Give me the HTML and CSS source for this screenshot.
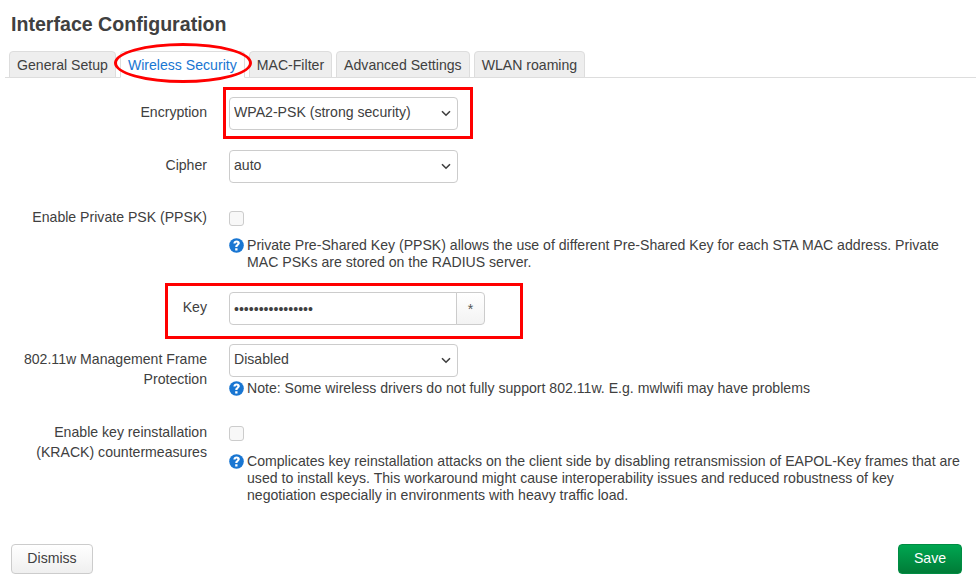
FILE: index.html
```html
<!DOCTYPE html>
<html lang="en">
<head>
<meta charset="utf-8">
<title>Interface Configuration</title>
<link rel="stylesheet" href="styles.css">
</head>
<body>
<svg class="defs" width="0" height="0" aria-hidden="true"><symbol id="help" viewBox="0 0 15 15"><circle cx="7.5" cy="7.5" r="7.3" fill="#1976d2"/><path d="M4.4 5.6C4.4 3.7 5.8 2.5 7.7 2.5c1.8 0 3.1 1.1 3.1 2.6 0 1.1-.6 1.7-1.4 2.3-.7.5-.9.8-.9 1.4v.3H6.3v-.5c0-1 .3-1.5 1.2-2.2.6-.4.9-.7.9-1.2s-.3-.8-.8-.8c-.6 0-1 .4-1 1.2zM6.2 10.3h2.3v2.1H6.2z" fill="#fff"/></symbol></svg>
<main class="page">
  <h2 class="title">Interface Configuration</h2>
  <ul class="tabs">
    <li class="tab">General Setup</li>
    <li class="tab active">Wireless Security</li>
    <li class="tab">MAC-Filter</li>
    <li class="tab">Advanced Settings</li>
    <li class="tab">WLAN roaming</li>
  </ul>
  <form class="form">
    <div class="row r-enc">
      <label class="label">Encryption</label>
      <div class="field"><select class="select enc"><option>WPA2-PSK (strong security)</option></select></div>
    </div>
    <div class="row r-cipher">
      <label class="label">Cipher</label>
      <div class="field"><select class="select"><option>auto</option></select></div>
    </div>
    <div class="row r-ppsk">
      <label class="label">Enable Private PSK (PPSK)</label>
      <div class="field">
        <input class="check" type="checkbox">
        <p class="help h-ppsk"><svg class="qicon"><use href="#help"/></svg>Private Pre-Shared Key (PPSK) allows the use of different Pre-Shared Key for each STA MAC address. Private MAC PSKs are stored on the RADIUS server.</p>
      </div>
    </div>
    <div class="row r-key">
      <label class="label">Key</label>
      <div class="field keygroup"><input class="keyinput" type="password" value="1234567890123456"><button type="button" class="reveal">*</button></div>
    </div>
    <div class="row r-mfp">
      <label class="label">802.11w Management Frame Protection</label>
      <div class="field">
        <select class="select"><option>Disabled</option></select>
        <p class="help h-mfp"><svg class="qicon"><use href="#help"/></svg>Note: Some wireless drivers do not fully support 802.11w. E.g. mwlwifi may have problems</p>
      </div>
    </div>
    <div class="row r-krack">
      <label class="label">Enable key reinstallation (KRACK) countermeasures</label>
      <div class="field">
        <input class="check" type="checkbox">
        <p class="help h-krack"><svg class="qicon"><use href="#help"/></svg>Complicates key reinstallation attacks on the client side by disabling retransmission of EAPOL-Key frames that are used to install keys. This workaround might cause interoperability issues and reduced robustness of key negotiation especially in environments with heavy traffic load.</p>
      </div>
    </div>
  </form>
  <div class="actions">
    <button type="button" class="btn dismiss">Dismiss</button>
    <button type="button" class="btn save">Save</button>
  </div>
</main>
<span class="mark ellipse"></span>
<span class="mark box-enc"></span>
<span class="mark box-key"></span>
</body>
</html>
```
FILE: styles.css
```css
* { box-sizing: border-box; }
html, body { margin: 0; height: 100%; }
body {
  background: #fff;
  color: #404040;
  font: 14.1px/20px "Liberation Sans", Arial, sans-serif;
  overflow: hidden;
}
.defs { position: absolute; }
.page { padding: 0 14px 0 5px; }
.title {
  margin: 0;
  padding: 14px 0 0 6px;
  height: 51px;
  font-size: 19.6px;
  line-height: 20px;
  font-weight: 700;
  color: #404040;
}
.tabs {
  display: flex;
  list-style: none;
  margin: 0 -14px 0 0;
  padding: 0 0 0 4px;
  height: 27px;
  border-bottom: 1px solid #ddd;
}
.tab {
  height: 27px;
  margin-right: 4px;
  padding: 3px 7px 0;
  background: #eee;
  border: 1px solid #ddd;
  border-radius: 4px 4px 0 0;
  white-space: nowrap;
}
.tab.active {
  color: #1976d2;
  background: #fff;
  border-bottom-color: #fff;
  padding: 3px 7px 0;
}
.row {
  display: grid;
  grid-template-columns: 202px 1fr;
  column-gap: 22px;
}
.label { text-align: right; padding-top: 5px; }
.r-enc { margin-top: 19px; }
.r-cipher { margin-top: 20px; }
.r-ppsk { margin-top: 28px; }
.r-key { margin-top: 21px; }
.r-mfp { margin-top: 19px; }
.r-krack { margin-top: 29px; }
.r-ppsk .label { padding-top: 0; margin-top: -4px; }
.r-krack .label { padding-top: 0; margin-top: -4px; }
.select {
  appearance: none;
  display: block;
  width: 229px;
  height: 33px;
  padding: 0 24px 3px 4px;
  font: inherit;
  color: #404040;
  background-color: #fff;
  background-image: url("data:image/svg+xml,%3Csvg xmlns='http://www.w3.org/2000/svg' width='10' height='7'%3E%3Cpath d='M1 1.2l4 4 4-4' fill='none' stroke='%23404040' stroke-width='1.6'/%3E%3C/svg%3E");
  background-repeat: no-repeat;
  background-position: right 6px center;
  border: 1px solid #ccc;
  border-radius: 4px;
}
.check {
  appearance: none;
  display: block;
  width: 15px;
  height: 15px;
  margin: 0;
  background: #f8f8f8;
  border: 1px solid #ccc;
  border-radius: 3px;
}
.help {
  position: relative;
  margin: 0;
  padding-left: 18px;
  line-height: 17px;
}
.h-ppsk { margin-top: 11px; }
.h-mfp { margin-top: 3px; }
.h-krack { margin-top: 12px; }
.qicon {
  position: absolute;
  left: 0;
  top: 1px;
  width: 15px;
  height: 15px;
}
.keygroup { display: flex; }
.keyinput {
  width: 228px;
  height: 33px;
  padding: 0 4px;
  font: inherit;
  color: #404040;
  border: 1px solid #ccc;
  border-radius: 4px 0 0 4px;
}
.reveal {
  width: 29px;
  height: 33px;
  margin-left: -1px;
  padding: 0;
  font: inherit;
  color: #555;
  background: linear-gradient(#fff, #f3f3f3);
  border: 1px solid #ccc;
  border-radius: 0 4px 4px 0;
}
.actions {
  display: flex;
  justify-content: space-between;
  margin-top: 40px;
  padding-left: 6px;
}
.btn {
  height: 30px;
  padding: 0 0 2px;
  font: inherit;
  border-radius: 4px;
}
.dismiss {
  width: 82px;
  color: #404040;
  background: linear-gradient(#fff, #efefef);
  border: 1px solid #ccc;
}
.save {
  width: 64px;
  color: #fff;
  background: linear-gradient(#00a651, #007c37);
  border: 1px solid #008c43;
}
.mark { position: absolute; pointer-events: none; border: 3px solid #ff0000; }
.ellipse { left: 114px; top: 43px; width: 138px; height: 40px; border-radius: 50%; }
.box-enc { left: 223px; top: 87px; width: 250px; height: 52px; }
.box-key { left: 165px; top: 283px; width: 358px; height: 56px; }
```
